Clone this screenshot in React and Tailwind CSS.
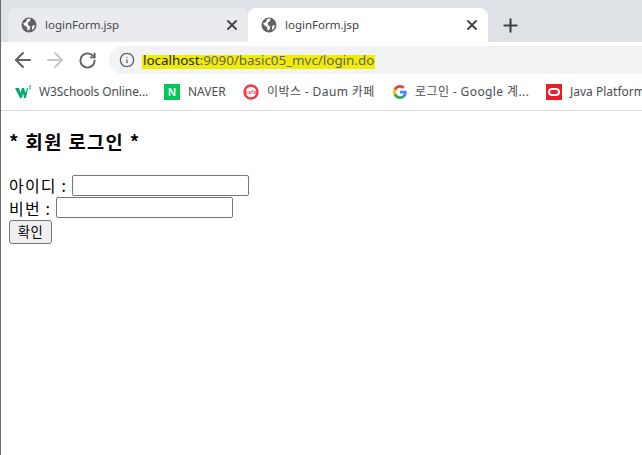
import React from 'react';
import { ArrowLeft, ArrowRight, RotateCw, Info, X, Plus } from 'lucide-react';

const uiFont = "font-['Noto_Sans','Noto_Sans_CJK_KR',sans-serif]";
const pageFont = "font-['Noto_Sans_CJK_KR',sans-serif]";

const Globe = () => (
  <svg width="16" height="16" viewBox="0 0 16 16">
    <circle cx="8" cy="8" r="7.5" fill="#5f6368" />
    <path d="M2 6.5 L5 5 L6 2 L9.5 1.5 L9 4 L6.5 6 L7.5 8.5 L9.5 9.5 L8 13.5 L6.5 13 L6 10 L3.5 8.5 Z" fill="#fff" />
    <path d="M11 9 L14 8 L13 11.5 L11 13 Z" fill="#fff" />
  </svg>
);

const Tab = ({ active }) => (
  <div className={`flex items-center w-[240px] h-[34px] pl-[13px] pr-[8px] rounded-t-lg ${active ? 'bg-white' : 'bg-[#e9ebee]'}`}>
    <Globe />
    <span className={`ml-[8px] flex-1 text-[11.5px] ${active ? 'text-[#3c4043]' : 'text-[#45474a]'}`}>loginForm.jsp</span>
    <X size={16} strokeWidth={3} className="text-[#45484c]" />
  </div>
);

const W3Logo = () => (
  <svg width="16" height="14" viewBox="0 0 16 14">
    <path d="M0 3 H4 L5.5 8 L7 3 H9 L10.5 8 L12 3 H13 L11 13 H9 L8 8 L7 13 H5 Z" fill="#04aa6d" />
    <path d="M13.5 1 H16 L14.8 2.2 L16 3.5 L14 4.5" fill="none" stroke="#04aa6d" strokeWidth="0.8" />
  </svg>
);

const NaverLogo = () => (
  <span className="flex items-center justify-center w-4 h-4 bg-[#03c75a] text-white text-[11px] font-black leading-none font-['Liberation_Sans',sans-serif]">N</span>
);

const DaumLogo = () => (
  <svg width="16" height="16" viewBox="0 0 16 16">
    <circle cx="8" cy="8" r="6.5" fill="#fff" stroke="#ee3a46" strokeWidth="2.4" />
    <text x="8" y="9.5" textAnchor="middle" fontSize="4.5" fontWeight="bold" fill="#ee3a46">cafe</text>
  </svg>
);

const GoogleLogo = () => (
  <svg width="14" height="14" viewBox="0 0 48 48">
    <path fill="#EA4335" d="M24 9.5c3.5 0 6.7 1.2 9.2 3.6l6.9-6.9C35.9 2.4 30.5 0 24 0 14.6 0 6.5 5.4 2.6 13.2l8 6.2C12.5 13.6 17.8 9.5 24 9.5z" />
    <path fill="#4285F4" d="M46.9 24.5c0-1.6-.1-3.1-.4-4.5H24v9h12.9c-.6 3-2.2 5.5-4.8 7.2l7.7 6c4.5-4.2 7.1-10.3 7.1-17.7z" />
    <path fill="#FBBC05" d="M10.5 28.6c-.5-1.4-.8-3-.8-4.6s.3-3.2.8-4.6l-8-6.2C.9 16.4 0 20.1 0 24s.9 7.6 2.6 10.8l7.9-6.2z" />
    <path fill="#34A853" d="M24 48c6.5 0 11.9-2.1 15.9-5.8l-7.7-6c-2.2 1.4-4.9 2.3-8.2 2.3-6.2 0-11.5-4.2-13.4-9.8l-8 6.2C6.5 42.6 14.6 48 24 48z" />
  </svg>
);

const OracleLogo = () => (
  <span className="flex items-center justify-center w-4 h-4 bg-[#ed1c24]">
    <span className="w-3 h-[8px] rounded-[4px] border-2 border-white" />
  </span>
);

const bookmarks = [
  { icon: <W3Logo />, label: 'W3Schools Online...', width: 'w-[149px]', tracking: 'tracking-[-0.1px]' },
  { icon: <NaverLogo />, label: 'NAVER', width: 'w-[79px]', tracking: '' },
  { icon: <DaumLogo />, label: '이박스 - Daum 카페', width: 'w-[150px]', tracking: 'tracking-[0.4px]' },
  { icon: <GoogleLogo />, label: '로그인 - Google 계...', width: 'w-[153px]', tracking: 'tracking-[0.4px]' },
  { icon: <OracleLogo />, label: 'Java Platform', width: 'w-[110px]', tracking: '' },
];

const App = () => {
  return (
    <div className={`w-[642px] h-[455px] overflow-hidden bg-white border-l border-[#6b6b6b] ${uiFont}`}>
      <div className="flex h-[42px] pt-2 pl-[7px] bg-[#dee1e6]">
        <Tab />
        <Tab active />
        <div className="flex items-center pl-[12px]">
          <Plus size={21} strokeWidth={2.4} className="text-[#3c4043]" />
        </div>
      </div>

      <div className="flex items-center h-[32px] pt-1">
        <div className="flex items-center gap-[8px] pl-[10px] w-[108px] shrink-0">
          <ArrowLeft size={24} strokeWidth={2} className="text-[#5f6368]" />
          <ArrowRight size={24} strokeWidth={2} className="text-[#c4c7cb]" />
          <span className="flex items-center justify-center w-6 h-6">
            <RotateCw size={19} strokeWidth={2.4} className="text-[#5f6368]" />
          </span>
        </div>
        <div className="flex items-center flex-1 h-[28px] pl-[10px] rounded-l-full bg-[#f1f3f4]">
          <Info size={16} strokeWidth={2} className="text-[#5f6368]" />
          <span className="ml-[7px] mt-[4px] px-px h-[14px] leading-[10px] bg-[#f2ec00] text-[13.4px] text-[#5f6368]">
            <span className="text-[#202124]">localhost</span>:9090/basic05_mvc/login.do
          </span>
        </div>
      </div>

      <div className="flex items-center h-[37px] pl-[14px] border-b border-[#d9dbdd] whitespace-nowrap">
        {bookmarks.map((b) => (
          <div key={b.label} className={`flex items-center gap-[8px] shrink-0 text-[12px] text-[#4a4d50] ${b.width} ${b.tracking}`}>
            {b.icon}
            <span>{b.label}</span>
          </div>
        ))}
      </div>

      <div className={`pl-2 text-black ${pageFont}`}>
        <h3 className="mt-[16px] mb-[20px] text-[18.72px] leading-[27px] font-bold tracking-[1.4px]">* 회원 로그인 *</h3>
        <form>
          <div className="flex items-center h-[22px] mb-px text-[16px] tracking-[1.2px]">
            아이디 :
            <input type="text" className="ml-[5px] w-[177px] h-[21px] border border-[#767676] rounded-[2px]" />
          </div>
          <div className="flex items-center h-[21px] text-[16px] tracking-[1.2px]">
            비번 :
            <input type="text" className="ml-[5px] w-[177px] h-[21px] border border-[#767676] rounded-[2px]" />
          </div>
          <button type="button" className="w-[43px] h-[24px] text-[13.33px] tracking-[0.5px] bg-[#efefef] border border-[#767676] rounded-[3px]">확인</button>
        </form>
      </div>
    </div>
  );
};

export default App;
